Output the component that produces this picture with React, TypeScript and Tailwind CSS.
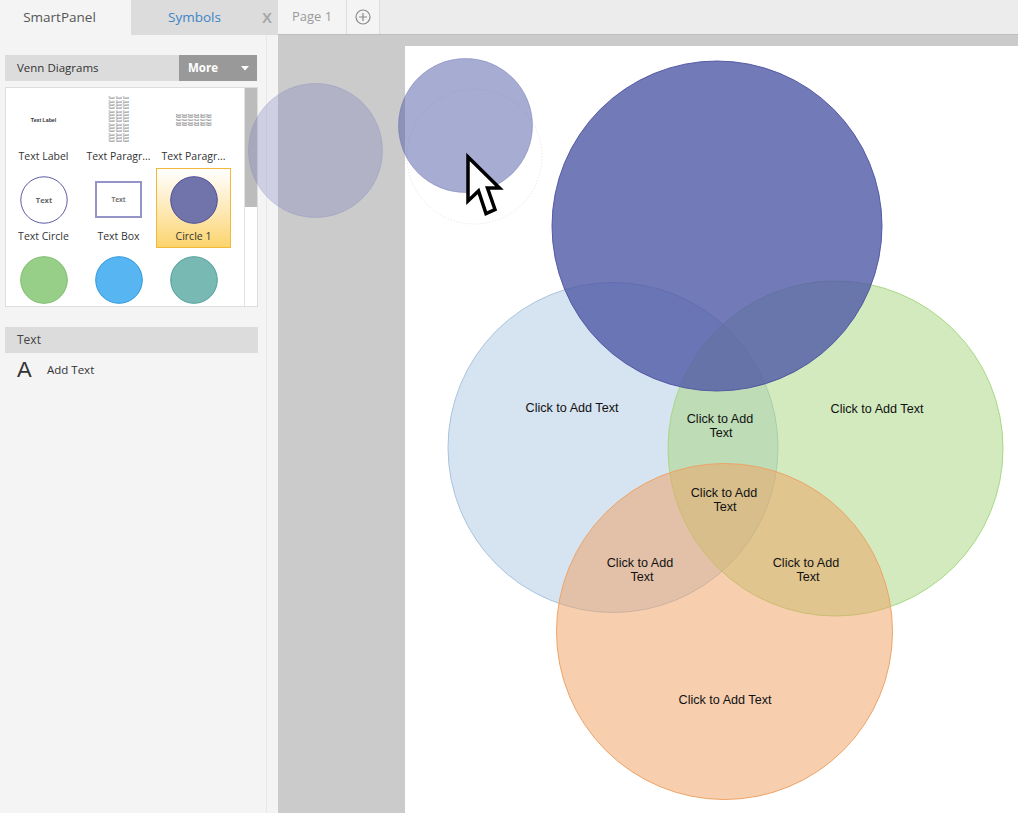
import React from "react";

function ParagraphThumb({ lines, text, size, step, startY }: { lines: number; text: string; size: number; step: number; startY: number }) {
  return (
    <svg width="75" height="47" viewBox="0 0 75 47" textRendering="geometricPrecision">
      {Array.from({ length: lines }).map((_, i) => (
        <text
          key={i}
          x="37.5"
          y={startY + i * step}
          textAnchor="middle"
          fontSize={size}
          fontFamily="Liberation Sans, sans-serif"
          fill="#333"
        >
          {text}
        </text>
      ))}
    </svg>
  );
}

function Cell({ children, label, selected }: { children: React.ReactNode; label: string; selected?: boolean }) {
  return (
    <div
      className={
        selected
          ? "h-[80px] w-[75px] flex flex-col items-center pt-[7px] border border-[#f2b93c] bg-gradient-to-b from-white to-[#fcd46b]"
          : "h-[80px] w-[75px] flex flex-col items-center pt-[8px]"
      }
    >
      <div className="h-[47px] w-full flex items-center justify-center">{children}</div>
      <div className="mt-[6px] leading-[14px] text-[10.5px] text-[#333] whitespace-nowrap">{label}</div>
    </div>
  );
}

function Circ({ fill, stroke }: { fill: string; stroke: string }) {
  return (
    <svg width="48" height="48" viewBox="0 0 48 48">
      <circle cx="24" cy="24" r="23.3" fill={fill} stroke={stroke} strokeWidth="1" />
    </svg>
  );
}

export default function App() {
  const venn = "Liberation Sans, Arial, sans-serif";
  return (
    <div className="relative w-[1018px] h-[813px] overflow-hidden flex font-['Open_Sans',sans-serif]">
      {/* Sidebar */}
      <div className="w-[278px] h-full flex flex-col bg-[#f4f4f4]">
        <div className="h-[35px] flex shrink-0">
          <div className="w-[131px] flex items-center justify-center pr-[12px] text-[13.5px] text-[#555]">SmartPanel</div>
          <div className="relative w-[147px] bg-[#dcdcdc] flex items-center justify-center pr-[20px] text-[13.5px] text-[#3d84c6]">
            Symbols
            <span className="absolute right-[6px] top-[7px] text-[15px] font-bold text-[#a8a8a8] font-['Liberation_Sans',sans-serif]">X</span>
          </div>
        </div>
        <div className="flex-1 flex">
          <div className="w-[267px] border-r border-[#e8e8e8] pt-[20px] px-[5px]">
            <div className="h-[26px] w-[252px] bg-[#dcdcdc] flex items-center">
              <span className="flex-1 pl-[12px] text-[11.5px] text-[#333]">Venn Diagrams</span>
              <div className="w-[78px] h-full bg-[#999999] flex items-center justify-between pl-[9px] pr-[8px]">
                <span className="text-[11.5px] font-bold text-white">More</span>
                <svg width="8" height="5" viewBox="0 0 8 5">
                  <path d="M0 0 L8 0 L4 4.5 Z" fill="#fff" />
                </svg>
              </div>
            </div>
            <div className="mt-[6px] h-[220px] w-[253px] bg-white border border-[#dddddd] flex overflow-hidden">
              <div className="flex-1">
                <div className="grid grid-cols-[75px_75px_75px]">
                  <Cell label="Text Label">
                    <svg width="75" height="47" viewBox="0 0 75 47">
                      <text x="37.5" y="25.5" textAnchor="middle" fontSize="5.2" fontWeight="bold" fontFamily="Liberation Sans, sans-serif" fill="#333">Text Label</text>
                    </svg>
                  </Cell>
                  <Cell label="Text Paragr...">
                    <ParagraphThumb lines={14} text="Text Text Text" size={3.4} step={3.3} startY={3.3} />
                  </Cell>
                  <Cell label="Text Paragr...">
                    <ParagraphThumb lines={5} text="Text Text Text Text Text Text" size={2.9} step={2.7} startY={19.5} />
                  </Cell>
                  <Cell label="Text Circle">
                    <svg width="48" height="48" viewBox="0 0 48 48">
                      <circle cx="24" cy="24" r="23.2" fill="#fff" stroke="#5b5ba6" strokeWidth="1" />
                      <text x="24" y="26.5" textAnchor="middle" fontSize="7.5" fontWeight="bold" fontFamily="Open Sans, sans-serif" fill="#666">Text</text>
                    </svg>
                  </Cell>
                  <Cell label="Text Box">
                    <div className="w-[47px] h-[37px] border-2 border-[#9494c8] flex items-center justify-center text-[6.5px] font-bold text-[#777]">Text</div>
                  </Cell>
                  <Cell label="Circle 1" selected>
                    <Circ fill="#7174ab" stroke="#4a4d98" />
                  </Cell>
                  <Cell label="">
                    <Circ fill="#97cf88" stroke="#7dbd6d" />
                  </Cell>
                  <Cell label="">
                    <Circ fill="#57b5f1" stroke="#2e97df" />
                  </Cell>
                  <Cell label="">
                    <Circ fill="#78b9b4" stroke="#4f9f99" />
                  </Cell>
                </div>
              </div>
              <div className="w-[13px] border-l border-[#e4e4e4] flex flex-col">
                <div className="h-[119px] w-[12px] bg-[#bcbcbc]" />
              </div>
            </div>
            <div className="mt-[20px] h-[26px] w-[253px] bg-[#dcdcdc] flex items-center pl-[12px] text-[12px] text-[#444]">Text</div>
            <div className="h-[34px] flex items-center pl-[12px]">
              <span className="w-[30px] text-[22px] leading-none text-[#333] font-['Liberation_Sans',sans-serif]">A</span>
              <span className="text-[11.5px] text-[#333]">Add Text</span>
            </div>
          </div>
          <div className="flex-1" />
        </div>
      </div>

      {/* Right side */}
      <div className="flex-1 flex flex-col">
        <div className="h-[35px] shrink-0 flex bg-[#ececec] border-b border-[#bdbdbd]">
          <div className="w-[69px] bg-[#f4f4f4] border-r border-[#dddddd] flex items-center justify-center text-[13px] text-[#9a9a9a]">Page 1</div>
          <div className="w-[33px] bg-[#f4f4f4] border-r border-[#dddddd] flex items-center justify-center">
            <svg width="16" height="16" viewBox="0 0 16 16">
              <circle cx="8" cy="8" r="7" fill="none" stroke="#8a8a8a" strokeWidth="1.2" />
              <path d="M8 4 V12 M4 8 H12" stroke="#8a8a8a" strokeWidth="1.2" />
            </svg>
          </div>
        </div>
        <div className="flex-1 bg-[#cbcbcb] pl-[127px] pt-[11px] flex">
          <div className="flex-1 bg-white" />
        </div>
      </div>

      {/* Canvas overlay: diagram shapes */}
      <svg className="absolute inset-0 pointer-events-none" width="1018" height="813" viewBox="0 0 1018 813">
        <circle cx="315.5" cy="150.5" r="67" fill="rgba(120,124,190,0.3)" stroke="rgba(120,124,190,0.25)" strokeWidth="1" />
        <circle cx="613" cy="447.5" r="165" fill="#aec8e2" fillOpacity="0.5" stroke="#a9c4df" strokeWidth="1" />
        <circle cx="835.5" cy="448.5" r="167.5" fill="#a6d67c" fillOpacity="0.5" stroke="#a8d884" strokeWidth="1" />
        <circle cx="717" cy="226" r="165" fill="#4f59a6" fillOpacity="0.8" stroke="#4a51a0" strokeOpacity="0.9" strokeWidth="1" />
        <circle cx="724.5" cy="631.5" r="168" fill="#f0a060" fillOpacity="0.5" stroke="#eda467" strokeWidth="1" />
        <g fontFamily={venn} fontSize="12.6" fill="#111" textAnchor="middle" dominantBaseline="central">
          <text x="572" y="408">Click to Add Text</text>
          <text x="877" y="409">Click to Add Text</text>
          <text x="720" y="419">Click to Add</text>
          <text x="721" y="433">Text</text>
          <text x="724" y="493">Click to Add</text>
          <text x="725" y="507">Text</text>
          <text x="640" y="563">Click to Add</text>
          <text x="642" y="577">Text</text>
          <text x="806" y="563">Click to Add</text>
          <text x="808" y="577">Text</text>
          <text x="725" y="700">Click to Add Text</text>
        </g>
        <circle cx="474.5" cy="156.5" r="67.5" fill="none" stroke="#d8d8d8" strokeWidth="0.8" strokeDasharray="1 2" />
        <circle cx="465.5" cy="125.5" r="67" fill="#4f59a6" fillOpacity="0.5" stroke="#4f59a6" strokeOpacity="0.35" strokeWidth="1" />
        <path
          d="M468 157 L468 201 L478.5 191 L486 213.5 L495 209.5 L487.5 188 L499.5 188 Z"
          fill="#fff"
          stroke="#000"
          strokeWidth="3.5"
          strokeLinejoin="miter"
        />
      </svg>
    </div>
  );
}
